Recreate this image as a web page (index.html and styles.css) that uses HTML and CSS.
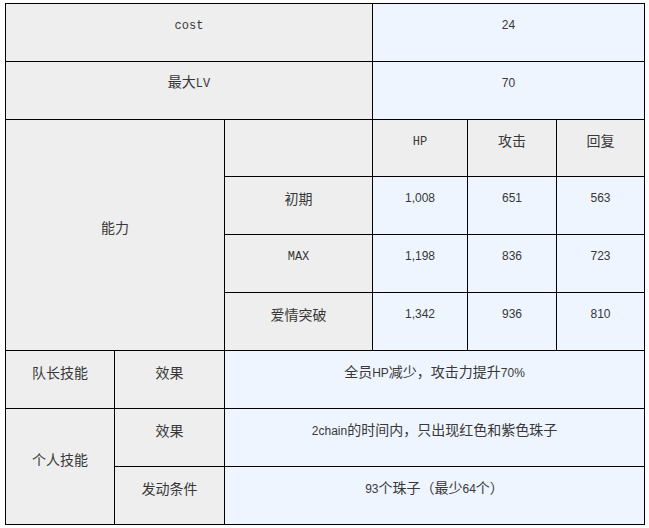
FILE: index.html
```html
<!DOCTYPE html>
<html lang="zh">
<head>
<meta charset="utf-8">
<title>角色数据</title>
<link rel="stylesheet" href="styles.css">
</head>
<body>
<table class="stats">
  <colgroup>
    <col class="c1"><col class="c2"><col class="c3"><col class="c4"><col class="c5"><col class="c6">
  </colgroup>
  <tbody>
    <tr>
      <th colspan="3"><span class="mono">cost</span></th>
      <td colspan="3">24</td>
    </tr>
    <tr>
      <th colspan="3">最大<span class="mono">LV</span></th>
      <td colspan="3">70</td>
    </tr>
    <tr class="short">
      <th colspan="2" rowspan="4">能力</th>
      <th></th>
      <th><span class="mono">HP</span></th>
      <th>攻击</th>
      <th>回复</th>
    </tr>
    <tr>
      <th>初期</th>
      <td>1,008</td>
      <td>651</td>
      <td>563</td>
    </tr>
    <tr>
      <th><span class="mono">MAX</span></th>
      <td>1,198</td>
      <td>836</td>
      <td>723</td>
    </tr>
    <tr>
      <th>爱情突破</th>
      <td>1,342</td>
      <td>936</td>
      <td>810</td>
    </tr>
    <tr>
      <th>队长技能</th>
      <th>效果</th>
      <td colspan="4"><span class="zh">全员</span>HP<span class="zh">减少，攻击力提升</span>70%</td>
    </tr>
    <tr>
      <th rowspan="2">个人技能</th>
      <th>效果</th>
      <td colspan="4">2chain<span class="zh">的时间内，只出现红色和紫色珠子</span></td>
    </tr>
    <tr>
      <th>发动条件</th>
      <td colspan="4">93<span class="zh">个珠子（最少</span>64<span class="zh">个）</span></td>
    </tr>
  </tbody>
</table>
</body>
</html>
```
FILE: styles.css
```css
html, body {
  margin: 0;
  padding: 0;
  background: #ffffff;
}

body {
  padding: 3px 0 0 5px;
}

.stats {
  border-collapse: collapse;
  table-layout: fixed;
  width: 639px;
  color: #383838;
}

.c1 { width: 109px; }
.c2 { width: 110px; }
.c3 { width: 148px; }
.c4 { width: 95px; }
.c5 { width: 89px; }
.c6 { width: 88px; }

.stats tr {
  height: 58px;
}

.stats tr.short {
  height: 57px;
}

.stats th,
.stats td {
  border: 1px solid #000000;
  padding: 0 0 15px 0;
  text-align: center;
  vertical-align: middle;
  line-height: 21px;
  font-weight: normal;
}

.stats th {
  background: #eeeeee;
  font-family: "Noto Sans CJK SC", "DejaVu Sans", sans-serif;
  font-size: 14px;
}

.stats td {
  background: #eef5ff;
  font-family: "Liberation Sans", "Noto Sans CJK SC", sans-serif;
  font-size: 12px;
}

.mono {
  font-family: "Liberation Mono", "DejaVu Sans Mono", monospace;
  font-size: 12px;
}

.zh {
  font-family: "Noto Sans CJK SC", sans-serif;
  font-size: 14px;
}
```
